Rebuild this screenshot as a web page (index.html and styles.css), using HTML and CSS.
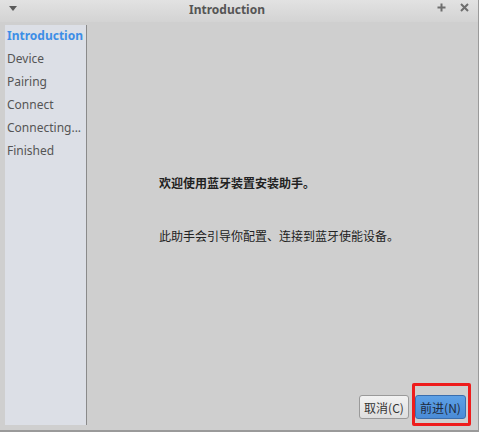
FILE: index.html
```html
<!DOCTYPE html>
<html>
<head>
<meta charset="utf-8">
<link rel="stylesheet" href="styles.css">
</head>
<body>
<div class="window">
  <div class="titlebar">
    <svg class="menu-icon" width="8" height="5" viewBox="0 0 8 5"><polygon points="0,0 8,0 4,5" fill="#5a5a5a"/></svg>
    <span class="title">Introduction</span>
    <div class="controls">
      <svg width="9" height="9" viewBox="0 0 9 9"><path d="M4.5 0.5 V8.5 M0.5 4.5 H8.5" stroke="#6e6e6e" stroke-width="2"/></svg>
      <svg width="9" height="9" viewBox="0 0 9 9"><path d="M1 1 L8 8 M8 1 L1 8" stroke="#6e6e6e" stroke-width="2"/></svg>
    </div>
  </div>
  <div class="main">
    <ul class="sidebar">
      <li class="active">Introduction</li>
      <li>Device</li>
      <li>Pairing</li>
      <li>Connect</li>
      <li>Connecting...</li>
      <li>Finished</li>
    </ul>
    <div class="content">
      <div class="texts">
        <p class="heading">欢迎使用蓝牙装置安装助手。</p>
        <p class="desc">此助手会引导你配置、连接到蓝牙使能设备。</p>
      </div>
      <div class="buttons">
        <button class="btn">取消(C)</button>
        <button class="btn primary">前进(N)</button>
        <div class="highlight"></div>
      </div>
    </div>
  </div>
</div>
</body>
</html>
```
FILE: styles.css
```css
html, body {
  margin: 0;
  padding: 0;
  background: #cfcfcf;
}
.window {
  width: 479px;
  height: 432px;
  box-sizing: border-box;
  border-right: 1px solid #9a9a9a;
  border-bottom: 2px solid #9a9a9a;
  background: #cfcfcf;
  display: flex;
  flex-direction: column;
  font-family: "Noto Sans", "Noto Sans CJK SC", sans-serif;
}
.titlebar {
  height: 22px;
  flex: none;
  position: relative;
  display: flex;
  align-items: center;
  justify-content: center;
  background: linear-gradient(#e2e2e2, #d3d3d3);
}
.menu-icon {
  position: absolute;
  left: 9px;
  top: 6px;
}
.title {
  font-weight: bold;
  font-size: 12px;
  color: #555;
  margin-right: 24px;
  margin-top: -4px;
}
.controls {
  position: absolute;
  right: 9px;
  top: 3px;
  display: flex;
  gap: 14px;
}
.main {
  flex: 1;
  display: flex;
  padding: 3px 0 5px 5px;
  min-height: 0;
}
.sidebar {
  list-style: none;
  margin: 0;
  padding: 0;
  width: 81px;
  background: #dcdfe6;
  border-right: 1px solid #8a8a8a;
  font-size: 12px;
  color: #555;
}
.sidebar li {
  height: 23px;
  line-height: 21px;
  padding-left: 2px;
  white-space: nowrap;
}
.sidebar li.active {
  font-weight: bold;
  color: #3d8ee6;
}
.content {
  flex: 1;
  display: flex;
  flex-direction: column;
  justify-content: space-between;
}
.texts {
  padding: 149px 0 0 72px;
  font-size: 12px;
  color: #222;
  font-family: "Noto Sans CJK SC", sans-serif;
}
.texts p {
  margin: 0;
}
.heading {
  font-weight: bold;
  line-height: 18px;
}
.desc {
  margin-top: 35px !important;
  line-height: 18px;
}
.buttons {
  position: relative;
  display: flex;
  justify-content: flex-end;
  gap: 6px;
  padding: 0 12px 6px 0;
}
.btn {
  height: 24px;
  box-sizing: border-box;
  border: 1px solid #9a9a9a;
  border-radius: 3px;
  background: linear-gradient(#f2f2f2, #dedede);
  font-family: "Noto Sans CJK SC", sans-serif;
  font-size: 12px;
  color: #333;
  padding: 0 4px;
  width: 50px;
}
.btn.primary {
  width: 51px;
  background: linear-gradient(#5da0e6, #4a8bd6);
  border-color: #3a6eae;
  color: #1e2a3c;
}
.highlight {
  position: absolute;
  right: 7px;
  top: -12px;
  width: 59px;
  height: 43px;
  box-sizing: border-box;
  border: 3px solid #ee1c1c;
  border-radius: 2px;
}
```
